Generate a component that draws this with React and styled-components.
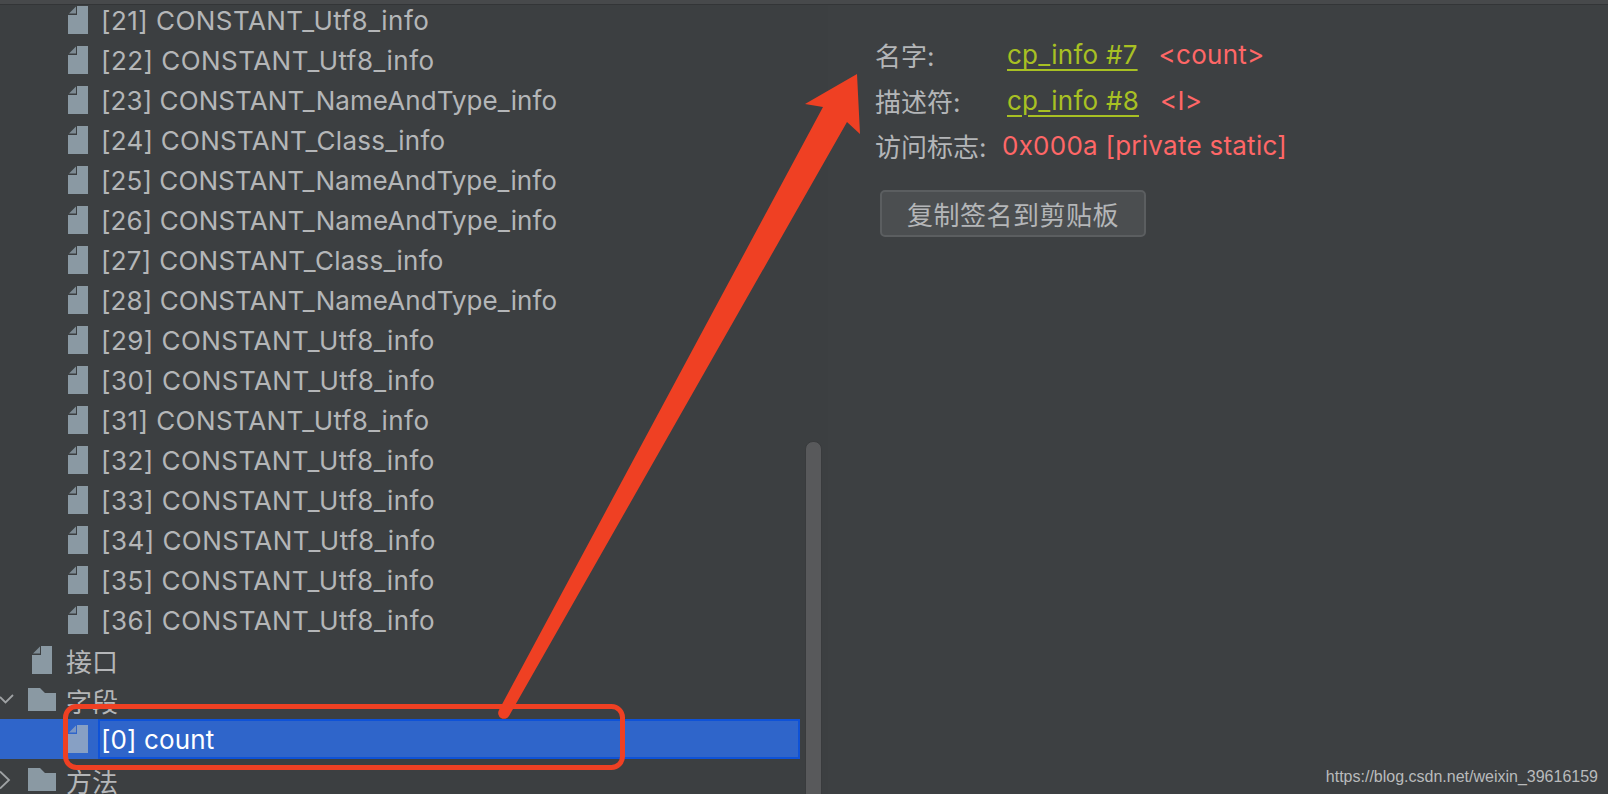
import React from "react";
import styled, { createGlobalStyle } from "styled-components";

const Global = createGlobalStyle`
  html, body { margin: 0; padding: 0; width: 1608px; height: 794px; overflow: hidden; background: #3c3f41; }
  #root { width: 1608px; height: 794px; }
`;
const FONT = `Inter, "Noto Sans CJK SC", sans-serif`;
const Page = styled.div`
  position: relative; width: 1608px; height: 794px; overflow: hidden;
  background: #3c3f41; font-family: ${FONT}; font-size: 26px; color: #b4b6b8;
  display: flex; flex-direction: column;
`;
const TopStrip = styled.div`
  height: 4px; background: #47494b; border-bottom: 1px solid #333537; position: relative; z-index: 1; flex: none;
`;
const Split = styled.div`display: flex; flex: 1; margin-top: -5px; min-height: 0;`;
const TreePane = styled.div`width: 805px; flex: none; position: relative;`;
const Row = styled.div`
  height: 40px; display: flex; align-items: center; padding-left: ${p => p.$indent}px; gap: ${p => p.$gap || 13}px; position: relative;
  background: ${p => p.$selected ? "#2f65ca" : "transparent"};
  margin-right: ${p => p.$selected ? "5px" : "0"};
  ${p => p.$selected ? "color:#fff; margin-top:-1px; margin-bottom:1px;" : ""}
`;
const RowLabel = styled.span`
  white-space: nowrap; letter-spacing: ${p => p.$spacing || 0}px;
  ${p => p.$selected ? `
    flex: 1; align-self: stretch; display: flex; align-items: center;
    margin-left: -3px; padding: 1px 0 0 1px;
    border: 2px solid #0e52d8;
  ` : ""}
`;
const Chevron = styled.svg`position: absolute; left: 0; width: 14px; height: 20px; top: 10px;`;
const ScrollTrack = styled.div`width: 23px; flex: none; display: flex; justify-content: center; padding-top: 441px;`;
const ScrollThumb = styled.div`
  width: 15px; height: 400px; background: #58595b; border: 1px solid #393b3d; border-radius: 8px 8px 0 0;
  margin-left: -6px;
`;
const InfoPane = styled.div`flex: 1; padding: 32px 0 0 47px; background: #3d4042;`;
const InfoRow = styled.div`height: 45.5px; display: flex; align-items: center; white-space: nowrap; letter-spacing: 0.25px;`;
const Label = styled.span`width: ${p => p.$w}px; flex: none; letter-spacing: 0;`;
const Link = styled.a`
  color: #a8c023; text-decoration: underline; text-underline-offset: 5px; text-decoration-thickness: 2px;
  margin-right: 21px;
`;
const Value = styled.span`color: #ff6767;`;
const CopyButton = styled.button`
  display: block; margin: 21.5px 0 0 5px; width: 266px; height: 47px; border-radius: 5px;
  background: #4b4e50; border: 2px solid #5b5e60; color: #b4b6b8; font: 26px ${FONT}; letter-spacing: 0.5px; padding: 0;
`;
const Watermark = styled.div`
  position: absolute; right: 10px; bottom: 8px; color: #b9bbbc; font: 16px "Liberation Sans", sans-serif;
`;
const Annotation = styled.svg`position: absolute; inset: 0; width: 1608px; height: 794px; pointer-events: none; z-index: 2;`;

const FileIcon = ({ light }) => {
  const c = light ? "#87a0c4" : "#8a99a3";
  return (
    <svg width="20" height="28" viewBox="0 0 20 28" style={{ flex: "none" }}>
      <path d="M9 0 H20 V28 H0 V9 H9 Z" fill={c} />
      <path d="M8 0.5 V7.5 H1 Z" fill={c} opacity="0.85" />
    </svg>
  );
};
const FolderIcon = () => (
  <svg width="28" height="24" viewBox="0 0 28 24" style={{ flex: "none", marginTop: "-2px" }}>
    <path d="M0 1 H12 L17 6 H28 V24 H0 Z" fill="#8a99a3" />
  </svg>
);

const SPACING = { Utf8: 0.45, Class: 0.26, NameAndType: 0.08 };
const rows = [
  [21, "Utf8"], [22, "Utf8"], [23, "NameAndType"], [24, "Class"], [25, "NameAndType"], [26, "NameAndType"],
  [27, "Class"], [28, "NameAndType"], [29, "Utf8"], [30, "Utf8"], [31, "Utf8"], [32, "Utf8"],
  [33, "Utf8"], [34, "Utf8"], [35, "Utf8"], [36, "Utf8"],
];

export default function App() {
  return (
    <Page>
      <Global />
      <TopStrip />
      <Split>
        <TreePane>
          {rows.map(([n, kind]) => (
            <Row key={n} $indent={68}>
              <FileIcon />
              <RowLabel $spacing={SPACING[kind]}>[{n}] CONSTANT_{kind}_info</RowLabel>
            </Row>
          ))}
          <Row $indent={32} $gap={14}><FileIcon /><RowLabel>接口</RowLabel></Row>
          <Row $indent={28} $gap={10}>
            <Chevron viewBox="0 0 14 20"><path d="M0 7 L5.5 12.5 L13 5" fill="none" stroke="#9fa2a4" strokeWidth="1.8" /></Chevron>
            <FolderIcon /><RowLabel>字段</RowLabel>
          </Row>
          <Row $indent={68} $selected><FileIcon light /><RowLabel $selected $spacing={0.1}>[0] count</RowLabel></Row>
          <Row $indent={28} $gap={10}>
            <Chevron viewBox="0 0 14 20"><path d="M0 1.5 L9 10 L0 18.5" fill="none" stroke="#9fa2a4" strokeWidth="1.8" /></Chevron>
            <FolderIcon /><RowLabel>方法</RowLabel>
          </Row>
        </TreePane>
        <ScrollTrack><ScrollThumb /></ScrollTrack>
        <InfoPane>
          <InfoRow><Label $w={132}>名字:</Label><Link>cp_info #7</Link><Value>&lt;count&gt;</Value></InfoRow>
          <InfoRow><Label $w={132}>描述符:</Label><Link>cp_info #8</Link><Value>&lt;I&gt;</Value></InfoRow>
          <InfoRow><Label $w={127}>访问标志:</Label><Value>0x000a [private static]</Value></InfoRow>
          <CopyButton>复制签名到剪贴板</CopyButton>
        </InfoPane>
      </Split>
      <Watermark>https://blog.csdn.net/weixin_39616159</Watermark>
      <Annotation viewBox="0 0 1608 794">
        <rect x="65.5" y="706.5" width="557" height="61" rx="11" fill="none" stroke="#ef4023" strokeWidth="5" />
        <path d="M857 74 L860 134 L847 122 L509 716 A5.5 5.5 0 0 1 499 710 L823 107 L805 104 Z" fill="#ef4023" />
      </Annotation>
    </Page>
  );
}
